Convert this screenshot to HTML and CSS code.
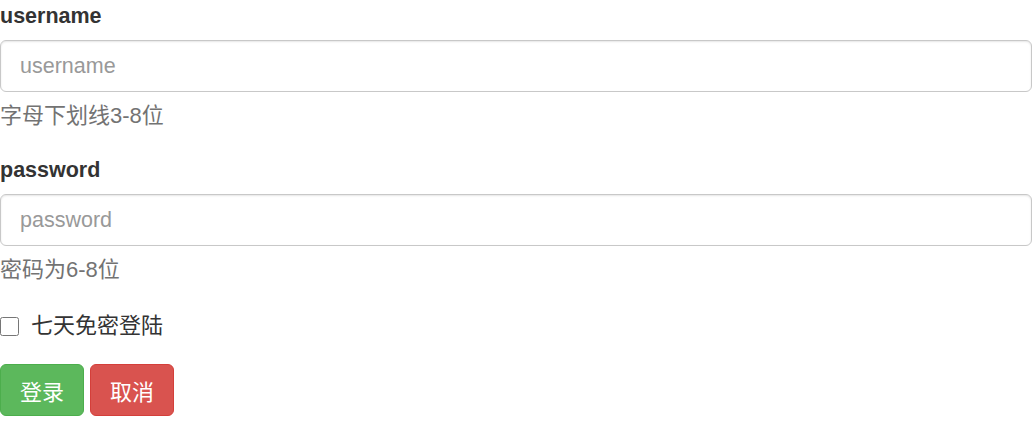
FILE: index.html
```html
<!DOCTYPE html>
<html lang="zh-CN">

<head>
    <meta charset="UTF-8" />
    <meta name="viewport" content="width=device-width, initial-scale=1.0" />
    <title>登录</title>
    <link rel="stylesheet" href="styles.css">
</head>

<body>
    <form class="login" autocomplete="off">
        <div class="form-group">
            <label for="uname">username</label>
            <input type="text" id="uname" class="form-control" placeholder="username" />
            <p class="help">字母下划线3-8位</p>
        </div>
        <div class="form-group">
            <label for="pwd">password</label>
            <input type="password" id="pwd" class="form-control" placeholder="password" />
            <p class="help">密码为6-8位</p>
        </div>
        <div class="checkbox">
            <label><input type="checkbox" /><span>七天免密登陆</span></label>
        </div>
        <div class="actions">
            <button type="submit" class="btn btn-success">登录</button>
            <button type="reset" class="btn btn-danger">取消</button>
        </div>
    </form>
</body>

</html>
```

FILE: styles.css
```css
* {
    margin: 0;
    padding: 0;
    box-sizing: border-box;
}

body {
    font-family: "Liberation Sans", Arial, "Noto Sans CJK SC", sans-serif;
    font-size: 21.5px;
    color: #333;
    background: #fff;
}

.login {
    width: 1032px;
}

.form-group {
    margin-bottom: 22px;
}

.form-group label {
    display: block;
    font-weight: 700;
    line-height: 32px;
    margin-bottom: 8px;
}

.form-control {
    display: block;
    width: 100%;
    height: 52px;
    padding: 0 19px;
    font-family: inherit;
    font-size: 21.5px;
    color: #555;
    border: 1px solid #c8c8c8;
    border-radius: 6px;
    box-shadow: inset 0 1px 2px rgba(0, 0, 0, .1);
    outline: none;
}

.form-control::placeholder {
    color: #999;
}

.help {
    margin-top: 8px;
    line-height: 32px;
    font-size: 22px;
    color: #737373;
}

.checkbox {
    margin-top: 25px;
    line-height: 30px;
    font-size: 22px;
}

.checkbox label {
    display: flex;
    align-items: center;
}

.checkbox input {
    width: 19px;
    height: 19px;
    margin: 0 12px 0 0;
}

.actions {
    margin-top: 23px;
    display: flex;
    gap: 6px;
}

.btn {
    height: 52px;
    padding: 0 19px;
    font-family: inherit;
    font-size: 22px;
    color: #fff;
    border: 1px solid transparent;
    border-radius: 6px;
    cursor: pointer;
}

.btn-success {
    background-color: #5cb85c;
    border-color: #4cae4c;
}

.btn-danger {
    background-color: #d9534f;
    border-color: #d43f3a;
}
```
